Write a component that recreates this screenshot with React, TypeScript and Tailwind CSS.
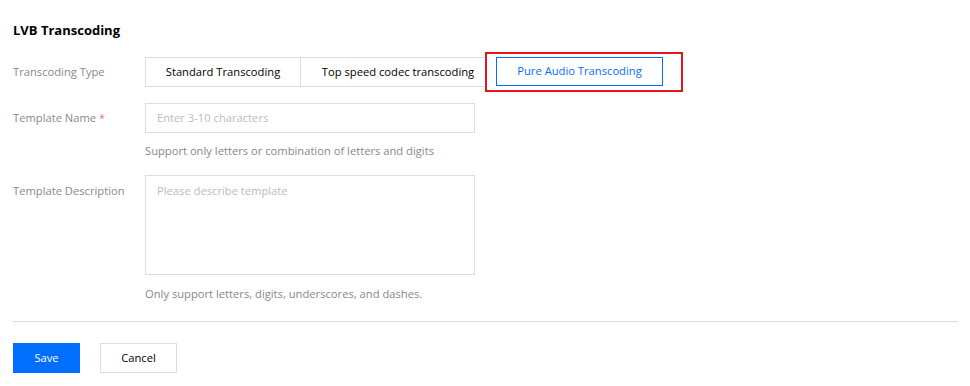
import React from "react";

export default function App() {
  const font = { fontFamily: '"Segoe UI", "Open Sans", "Noto Sans", sans-serif' };
  return (
    <div className="w-[970px] h-[386px] bg-white pl-[13px] pr-[12px] text-[11.2px]" style={font}>
      <div className="pt-[20px] h-[57px]">
        <h1 className="text-[13px] font-bold text-black leading-[20px]">LVB Transcoding</h1>
      </div>
      <div className="flex items-center h-[30px]">
        <div className="w-[132px] text-[#888888]">Transcoding Type</div>
        <div className="relative flex items-start h-[30px]">
          <div className="flex h-[30px] border border-[#dddddd]">
            <div className="w-[155px] flex items-center justify-center text-black border-r border-[#dddddd]">Standard Transcoding</div>
            <div className="w-[184px] pl-[10px] flex items-center justify-center text-black">Top speed codec transcoding</div>
          </div>
          <div className="ml-[10px] w-[167px] h-[29px] border border-[#006eff] flex items-center justify-center text-[#006eff] bg-white">
            Pure Audio Transcoding
          </div>
          <div className="absolute left-[340px] top-[-5px] w-[198px] h-[40px] border-2 border-[#e8131d] pointer-events-none" />
        </div>
      </div>
      <div className="flex mt-[16px]">
        <div className="w-[132px] h-[30px] flex items-center text-[#888888]">
          Template Name <span className="text-[#e86a6a] ml-[3px] text-[10px]">*</span>
        </div>
        <div>
          <div className="w-[330px] h-[30px] border border-[#dddddd] flex items-center px-[11px] text-[#bbbbbb]">
            Enter 3-10 characters
          </div>
          <div className="mt-[9px] leading-[18px] text-[#888888]">Support only letters or combination of letters and digits</div>
        </div>
      </div>
      <div className="flex mt-[15px]">
        <div className="w-[132px] h-[32px] flex items-center text-[#888888]">Template Description</div>
        <div>
          <div className="w-[330px] h-[100px] border border-[#dddddd] px-[11px] pt-[6px] text-[#bbbbbb] leading-[18px]">
            Please describe template
          </div>
          <div className="mt-[10px] leading-[18px] text-[#888888]">Only support letters, digits, underscores, and dashes.</div>
        </div>
      </div>
      <div className="mt-[18px] border-t border-[#dddddd]" />
      <div className="flex mt-[21px] gap-[20px]">
        <button className="w-[67px] h-[30px] bg-[#006eff] text-white">Save</button>
        <button className="w-[77px] h-[30px] border border-[#dddddd] text-black bg-white">Cancel</button>
      </div>
    </div>
  );
}
